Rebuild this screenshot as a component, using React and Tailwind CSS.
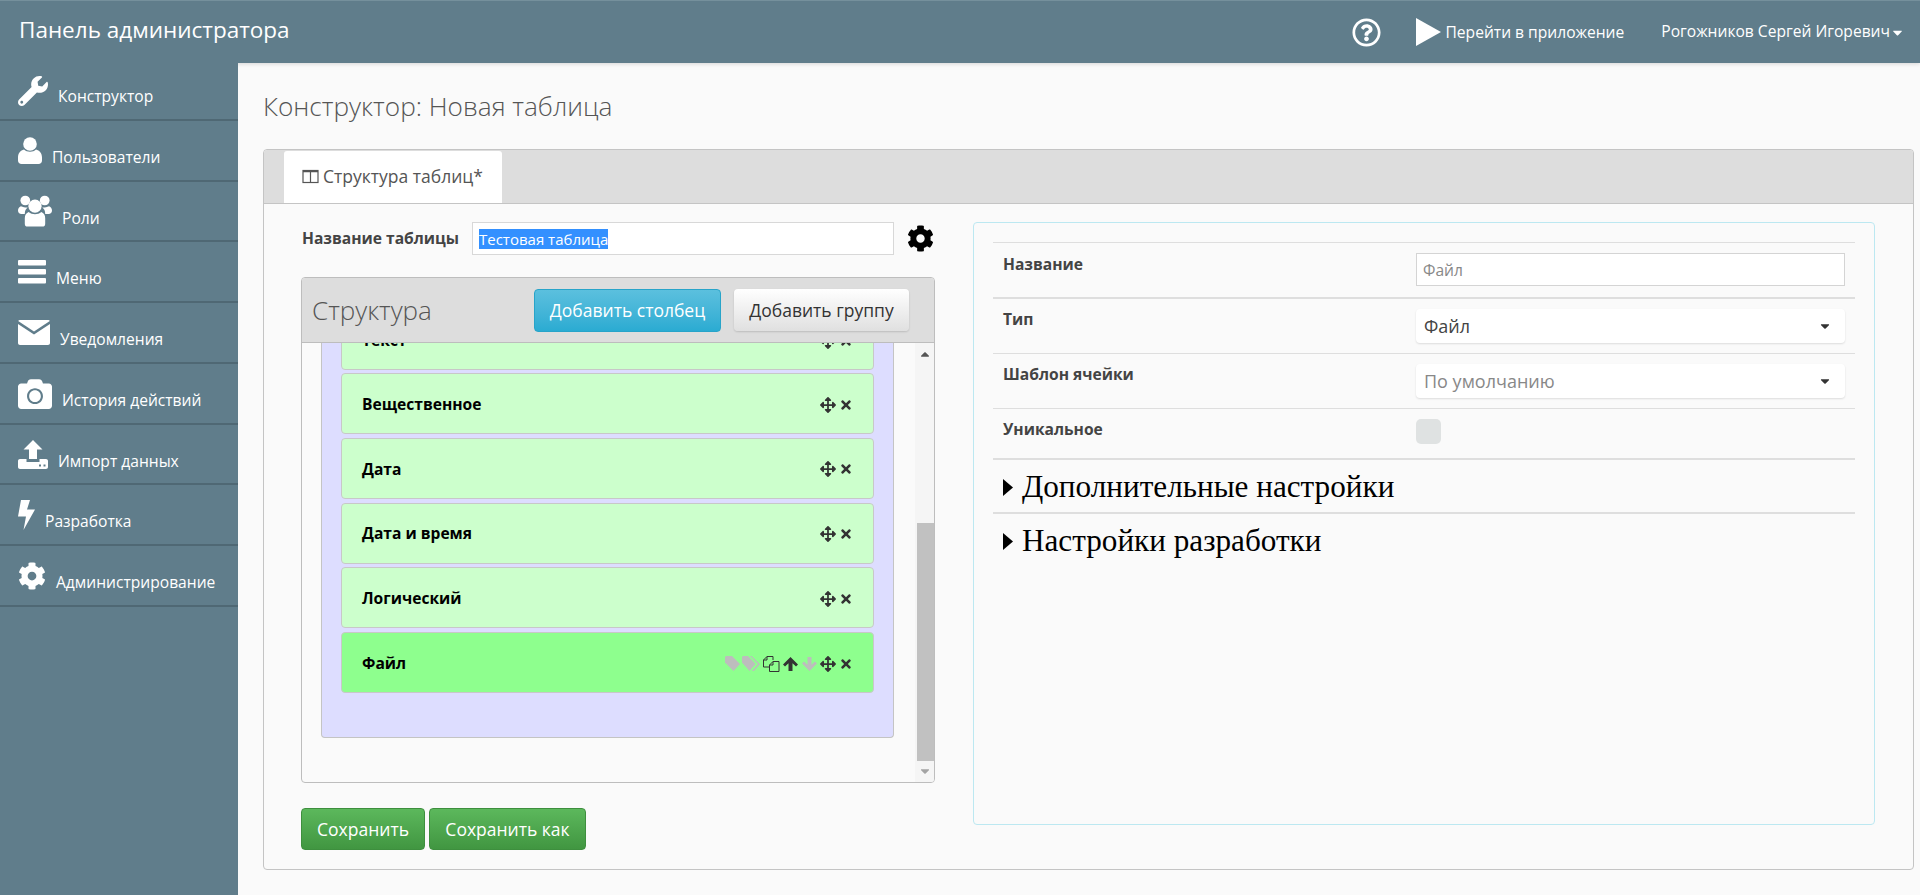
import React from "react";
import { FaWrench, FaCamera, FaCog, FaRegQuestionCircle, FaArrowsAlt, FaTimes, FaCaretDown } from "react-icons/fa";

const White = "#ffffff";

function UserIcon() {
  return (
    <svg width="24" height="27" viewBox="0 0 24 27" fill={White}>
      <circle cx="12" cy="7" r="6.8" />
      <path d="M6 12.500c3 3 9 3 12 0 3.500 1 6 3.500 6 8v3c0 2-1.500 3.500-3.500 3.500h-17C1.500 27 0 25.500 0 23.500v-3c0-4.500 2.500-7 6-8z" />
    </svg>
  );
}
function UsersIcon() {
  return (
    <svg width="34" height="32" viewBox="0 0 35 32" fill={White}>
      <circle cx="7.500" cy="5.200" r="5" />
      <circle cx="27.500" cy="5.200" r="5" />
      <path d="M3 11c-2 1-3 2.500-3 4.500 0 2.500 1.500 3.500 3.500 3.500h3.500c0-3 1-5 3-6.500-3 0-5-1-7-1.500zM32 11c2 1 3 2.500 3 4.500 0 2.500-1.500 3.500-3.500 3.500H28c0-3-1-5-3-6.500 3 0 5-1 7-1.500z" />
      <circle cx="17.500" cy="11" r="6.800" />
      <path d="M11 17c3.500 3 9.500 3 13 0 2.500 1 4 3 4 6.500v5.500c0 2-1 3-3 3H10c-2 0-3-1-3-3v-5.500c0-3.500 1.500-5.500 4-6.500z" />
    </svg>
  );
}
function MenuIcon() {
  return (
    <svg width="28" height="24" viewBox="0 0 28 24" fill={White}>
      <rect y="0" width="28" height="5.500" rx="1" />
      <rect y="9" width="28" height="5.500" rx="1" />
      <rect y="18" width="28" height="5.500" rx="1" />
    </svg>
  );
}
function EnvelopeIcon() {
  return (
    <svg width="32" height="25" viewBox="0 0 32 25" fill={White}>
      <path d="M2 0h28c.8 0 1.500.4 1.800 1L16 11.500.2 1C.5.400 1.200 0 2 0z" />
      <path d="M0 4l16 10.500L32 4v19c0 1.100-.9 2-2 2H2c-1.100 0-2-.9-2-2z" />
    </svg>
  );
}
function ImportIcon() {
  return (
    <svg width="30" height="29" viewBox="0 0 30 29" fill={White}>
      <path d="M15 0l9.500 9.500H19V19h-8V9.500H5.500z" />
      <path fillRule="evenodd" d="M2 19h6.500v3h13v-3H28c1.100 0 2 .9 2 2v6c0 1.100-.9 2-2 2H2c-1.100 0-2-.9-2-2v-6c0-1.100.9-2 2-2zM21 24.500h2v2h-2zM25.500 24.500h2v2h-2z" />
    </svg>
  );
}
function BoltIcon() {
  return (
    <svg width="17" height="30" viewBox="0 0 17 30" fill={White}>
      <path d="M3 0h9L9 9.500h8L5.500 30l2.500-13.500H0z" />
    </svg>
  );
}
function PlayIcon() {
  return (
    <svg width="25" height="28" viewBox="0 0 25 28" fill={White}>
      <path d="M0 0l25 14L0 28z" />
    </svg>
  );
}
function TableIcon() {
  return (
    <svg width="17" height="15" viewBox="0 0 17 15" fill="none" stroke="#555" strokeWidth="1.200">
      <rect x="1" y="1.500" width="15" height="12" />
      <path d="M8.500 1.500v12M1 2.700h15" />
    </svg>
  );
}
function TagIcon() {
  return (
    <svg width="15" height="15" viewBox="0 0 15 15" fill="#bdbdbd">
      <path d="M0 1.500C0 .7.700 0 1.500 0H7l8 8-6.500 7L0 6.500z" />
    </svg>
  );
}
function TagsIcon() {
  return (
    <svg width="18" height="15" viewBox="0 0 18 15" fill="#bdbdbd">
      <path d="M0 1.500C0 .7.700 0 1.500 0H6l7.500 8-6 7L0 6.500z" />
      <path d="M8 0h1.500L18 8l-6 7h-2l6-7z" />
    </svg>
  );
}
function CopyIcon() {
  return (
    <svg width="17" height="16" viewBox="0 0 17 16" fill="none" stroke="#333" strokeWidth="1">
      <path d="M10 4V.5H4L.5 4v7H6" />
      <path d="M4 .5V4H.5" />
      <path d="M16 5.500H10L6.500 9v6.500H16z" />
      <path d="M10 5.500V9H6.500" />
    </svg>
  );
}
function ArrowIcon({ color, down }) {
  return (
    <svg width="15" height="14" viewBox="0 0 15 14" fill={color} className={down ? "rotate-180" : ""}>
      <path d="M7.500 0L15 7.500 13 9.500 9.500 6.200V14h-4V6.200L2 9.500 0 7.500z" />
    </svg>
  );
}
function Triangle() {
  return (
    <svg width="10" height="17" viewBox="0 0 10 17" fill="#000" className="shrink-0">
      <path d="M0 0l10 8.500L0 17z" />
    </svg>
  );
}

const menu = [
  { label: "Конструктор", icon: <FaWrench size={30} color={White} />, h: "h-[58px]", t: "mt-[11px]" },
  { label: "Пользователи", icon: <UserIcon />, h: "h-[61px]", t: "mt-[15px]" },
  { label: "Роли", icon: <UsersIcon />, h: "h-[60px]", t: "mt-[15px]" },
  { label: "Меню", icon: <MenuIcon />, h: "h-[61px]", t: "mt-[15px]" },
  { label: "Уведомления", icon: <EnvelopeIcon />, h: "h-[61px]", t: "mt-[15px]" },
  { label: "История действий", icon: <FaCamera size={34} color={White} />, h: "h-[61px]", t: "mt-[15px]" },
  { label: "Импорт данных", icon: <ImportIcon />, h: "h-[60px]", t: "mt-[15px]" },
  { label: "Разработка", icon: <BoltIcon />, h: "h-[61px]", t: "mt-[15px]" },
  { label: "Администрирование", icon: <FaCog size={28} color={White} />, h: "h-[61px]", t: "mt-[15px]" },
];

function Sidebar() {
  return (
    <aside className="w-[238px] shrink-0 bg-[#607d8b]">
      {menu.map((m) => (
        <div key={m.label} className={`${m.h} flex items-center gap-[10px] pl-[18px] border-b-2 border-[#4f6874] text-white text-[15.6px]`}>
          <span className="flex shrink-0">{m.icon}</span>
          <span className={m.t}>{m.label}</span>
        </div>
      ))}
    </aside>
  );
}

function Header() {
  return (
    <header className="h-[63px] flex items-center bg-[#607d8b] border-t border-[#75909c] text-white shadow-[0_1px_4px_rgba(0,0,0,0.15)]">
      <div className="pl-[19px] text-[22.5px] leading-none mb-[3px]">Панель администратора</div>
      <div className="ml-auto flex items-center">
        <FaRegQuestionCircle size={29} color={White} className="mr-[35px]" />
        <PlayIcon />
        <span className="text-[15.6px] ml-[4px] pt-[2px]">Перейти в приложение</span>
        <span className="text-[15.6px] ml-[37px]">Рогожников Сергей Игоревич</span>
        <FaCaretDown size={15} color={White} className="mr-[15px]" />
      </div>
    </header>
  );
}

function RowIcons({ active }) {
  return (
    <div className="flex items-center pt-[2px]">
      {active && (
        <div className="flex items-center mr-[3px]">
          <TagIcon />
          <span className="ml-[2px]"><TagsIcon /></span>
          <span className="ml-[3px]"><CopyIcon /></span>
          <span className="ml-[3px]"><ArrowIcon color="#333" /></span>
          <span className="ml-[4px]"><ArrowIcon color="#bdbdbd" down /></span>
        </div>
      )}
      <FaArrowsAlt size={16} color="#333" />
      <FaTimes size={14} color="#333" className="ml-[3px]" />
    </div>
  );
}

function Row({ label, active, cut }) {
  return (
    <div className={`${cut ? "-mt-[34px] -mb-[0.75px]" : ""} h-[61px] shrink-0 flex items-center justify-between rounded-[4px] border border-[#c8c8c8] pl-[20px] pr-[20px] text-[15.6px] font-bold text-black ${active ? "bg-[#8eff8e]" : "bg-[#ccffcc]"}`}>
      <span className="pt-[2px]">{label}</span>
      <RowIcons active={active} />
    </div>
  );
}

function StructurePanel() {
  return (
    <div className="h-[506px] rounded-[4px] border border-[#bdbdbd] overflow-hidden flex flex-col">
      <div className="h-[65px] shrink-0 flex items-center bg-[#dddddd] border-b border-[#bdbdbd] pl-[10px] pr-[25px] z-10 relative">
        <span className="text-[26px] font-light text-[#555] mt-[1px]">Структура</span>
        <button className="ml-auto h-[43px] w-[187px] rounded-[4px] border border-[#28a4c9] bg-gradient-to-b from-[#5bc0de] to-[#2aabd2] text-white text-[17.5px]">Добавить столбец</button>
        <button className="ml-[13px] h-[42px] w-[175px] rounded-[4px] bg-gradient-to-b from-white to-[#e0e0e0] shadow-[0_1px_2px_rgba(0,0,0,0.15)] text-[#333] text-[17.5px]">Добавить группу</button>
      </div>
      <div className="flex-1 flex min-h-0">
        <div className="flex-1 min-w-0 pl-[19px] pr-[21px] overflow-hidden">
          <div className="rounded-b-[4px] bg-[#ddddff] border border-t-0 border-[#c4c4c4] h-[395px] px-[19px] flex flex-col gap-[3.750px] overflow-hidden">
            <Row label="Текст" cut />
            <Row label="Вещественное" />
            <Row label="Дата" />
            <Row label="Дата и время" />
            <Row label="Логический" />
            <Row label="Файл" active />
          </div>
        </div>
        <div className="w-[19px] shrink-0 bg-[#f5f5f5] flex flex-col items-center">
          <FaCaretDown size={14} color="#555" className="rotate-180 mt-[5px]" />
          <div className="flex-1" />
          <div className="w-[17px] h-[238px] bg-[#c1c1c1] ml-[2px]" />
          <FaCaretDown size={14} color="#a3a3a3" className="mt-[3px] mb-[4px]" />
        </div>
      </div>
    </div>
  );
}

function Select({ value, muted }) {
  return (
    <div className={`w-[429px] h-[34px] rounded-[4px] bg-white shadow-[0_1px_2px_rgba(0,0,0,0.12)] flex items-center justify-between pl-[8px] pr-[13px] text-[18px] ${muted ? "text-[#888]" : "text-[#444]"}`}>
      <span>{value}</span>
      <FaCaretDown size={14} color="#333" />
    </div>
  );
}

function PropRow({ label, h, thick, first, children }) {
  return (
    <div className={`${h} flex ${thick ? "border-b-[2px]" : "border-b"} border-[#dedede]`}>
      <div className={`w-[413px] shrink-0 pl-[10px] ${first ? "pt-[10px]" : "pt-[9px]"} text-[15.6px] font-bold text-[#444]`}>{label}</div>
      <div className="pl-[10px] pt-[10px]">{children}</div>
    </div>
  );
}

function Section({ label, h, line }) {
  return (
    <div className={`${h} flex items-center pl-[10px] text-black ${line ? "border-b-[2px] border-[#dedede] pt-[2px]" : ""}`}>
      <Triangle />
      <span className="ml-[9px] text-[31.2px] font-['Liberation_Serif',serif]">{label}</span>
    </div>
  );
}

function PropsPanel() {
  return (
    <div className="w-[902px] h-[603px] shrink-0 rounded-[4px] border border-[#bce8f1] pt-[19px] px-[19px]">
      <div className="border-t border-[#dedede]">
        <PropRow label="Название" h="h-[56px]" thick first>
          <div className="w-[429px] h-[33px] bg-white border border-[#d4d4d4] flex items-center pl-[6px] pt-[2px] text-[15.6px] text-[#888]">Файл</div>
        </PropRow>
        <PropRow label="Тип" h="h-[55px]"><Select value="Файл" /></PropRow>
        <PropRow label="Шаблон ячейки" h="h-[55px]"><Select value="По умолчанию" muted /></PropRow>
        <PropRow label="Уникальное" h="h-[51px]" thick>
          <div className="w-[25px] h-[25px] rounded-[5px] bg-[#dfe2e2]" />
        </PropRow>
        <Section label="Дополнительные настройки" h="h-[54px]" line />
        <Section label="Настройки разработки" h="h-[54px]" />
      </div>
    </div>
  );
}

export default function App() {
  return (
    <div className="h-[895px] overflow-hidden flex flex-col bg-[#fafafa] font-['Open_Sans',sans-serif]">
      <Header />
      <div className="flex-1 flex min-h-0">
        <Sidebar />
        <main className="flex-1 min-w-0 pl-[25px] pr-[6px]">
          <h1 className="text-[26.2px] font-light text-[#555] mt-[26px] mb-[26px] leading-[34px]">Конструктор: Новая таблица</h1>
          <div className="h-[721px] rounded-[4px] border border-[#c4c4c4] overflow-hidden">
            <div className="h-[54px] bg-[#dddddd] border-b border-[#c4c4c4] pl-[20px] pt-[1px]">
              <div className="w-[218px] h-[52px] bg-white rounded-t-[3px] flex items-center pl-[18px] pb-[2px] gap-[4px] text-[17.5px] text-[#555]">
                <TableIcon />
                <span>Структура таблиц*</span>
              </div>
            </div>
            <div className="flex pl-[37px] pt-[18px] gap-[38px]">
              <div className="w-[634px] shrink-0">
                <div className="flex items-center h-[33px] pl-[1px]">
                  <span className="w-[170px] text-[15.6px] font-bold text-[#444]">Название таблицы</span>
                  <div className="w-[422px] h-[33px] bg-white border border-[#d8d8d8] flex items-center pl-[6px] text-[15px]">
                    <span className="bg-[#3390ff] text-white leading-[20px]">Тестовая таблица</span>
                  </div>
                  <FaCog size={27} color="#000" className="ml-[13px]" />
                </div>
                <div className="mt-[22px]"><StructurePanel /></div>
                <div className="mt-[25px] flex gap-[4px]">
                  <button className="h-[42px] w-[124px] rounded-[4px] border border-[#3e8f3e] bg-gradient-to-b from-[#5cb85c] to-[#419641] text-white text-[17.5px]">Сохранить</button>
                  <button className="h-[42px] w-[157px] rounded-[4px] border border-[#3e8f3e] bg-gradient-to-b from-[#5cb85c] to-[#419641] text-white text-[17.5px]">Сохранить как</button>
                </div>
              </div>
              <PropsPanel />
            </div>
          </div>
        </main>
      </div>
    </div>
  );
}
